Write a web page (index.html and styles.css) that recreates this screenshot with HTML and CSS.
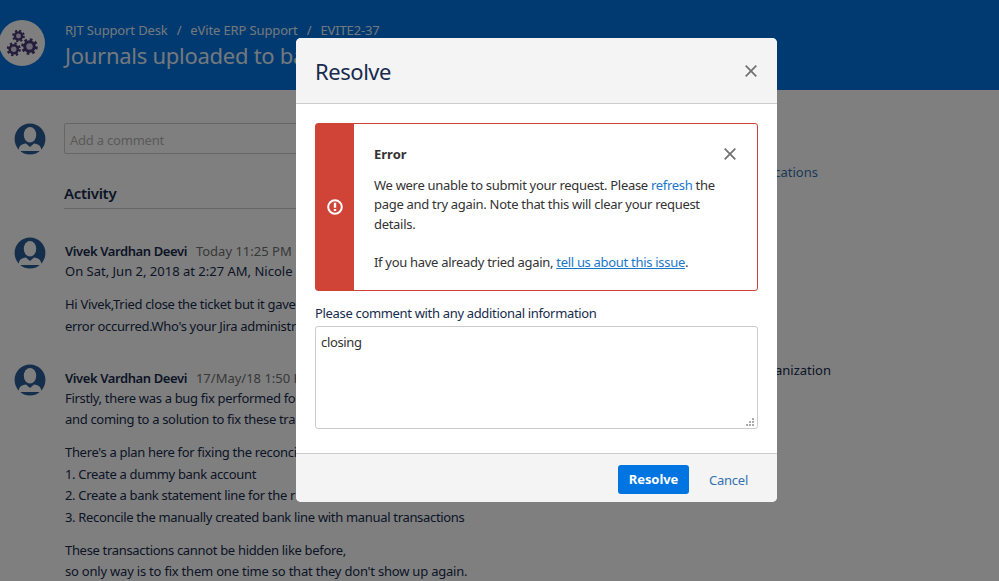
FILE: index.html
```html
<!DOCTYPE html>
<html lang="en">
<head>
  <meta charset="UTF-8">
  <meta name="viewport" content="width=device-width, initial-scale=1.0">
  <title>RJT Support Desk</title>
  <link rel="stylesheet" href="styles.css">
</head>
<body>
  <!-- shared icons -->
  <svg class="defs" width="0" height="0">
    <symbol id="avatar" viewBox="0 0 32 32">
      <circle cx="16" cy="16" r="15.4" fill="#2a5d96"/>
      <ellipse cx="16" cy="11.8" rx="6.2" ry="7.8" fill="#fff"/>
      <path d="M4.6 28C4.6 23 7.5 21.2 12 20.6L16 24L20 20.6C24.5 21.2 27.4 23 27.4 28Z" fill="#fff"/>
    </symbol>
    <symbol id="gear" viewBox="-10 -10 20 20">
      <circle r="5.6" fill="#d9d2ea" stroke="currentColor" stroke-width="3.6"/>
      <circle r="8.2" fill="none" stroke="currentColor" stroke-width="3.2" stroke-dasharray="3.2 3.24"/>
    </symbol>
    <symbol id="close" viewBox="0 0 12 12">
      <path d="M.7.7L11.3 11.3M11.3.7L.7 11.3" stroke="#707070" stroke-width="1.7"/>
    </symbol>
  </svg>

  <div class="page">
    <header class="header">
      <svg class="project-logo" viewBox="0 0 46 46">
        <circle cx="23" cy="23" r="23" fill="#fff"/>
        <g color="#4a3a78">
          <use href="#gear" x="13" y="9.5" width="13" height="13"/>
          <use href="#gear" x="7.5" y="22" width="14.5" height="14.5"/>
          <use href="#gear" x="22" y="18" width="17" height="17"/>
        </g>
      </svg>
      <div class="header-text">
        <nav class="breadcrumbs">
          <span>RJT Support Desk</span><span class="sep">/</span><span>eVite ERP Support</span><span class="sep">/</span><span>EVITE2-37</span>
        </nav>
        <h1>Journals uploaded to bank</h1>
      </div>
    </header>

    <div class="content">
      <main class="main">
        <div class="row comment-row">
          <svg class="avatar"><use href="#avatar"/></svg>
          <div class="comment-input">Add a comment</div>
        </div>
        <h2 class="activity-title">Activity</h2>

        <div class="row activity">
          <svg class="avatar"><use href="#avatar"/></svg>
          <div class="activity-body">
            <div class="meta"><strong>Vivek Vardhan Deevi</strong><span>Today 11:25 PM</span></div>
            <p class="intro">On Sat, Jun 2, 2018 at 2:27 AM, Nicole</p>
            <p>Hi Vivek,Tried close the ticket but it gave<br>error occurred.Who's your Jira administrator</p>
          </div>
        </div>

        <div class="row activity">
          <svg class="avatar"><use href="#avatar"/></svg>
          <div class="activity-body">
            <div class="meta"><strong>Vivek Vardhan Deevi</strong><span>17/May/18 1:50 PM</span></div>
            <p>Firstly, there was a bug fix performed for<br>and coming to a solution to fix these trans</p>
            <p>There's a plan here for fixing the reconciliation<br>1. Create a dummy bank account<br>2. Create a bank statement line for the r<br>3. Reconcile the manually created bank line with manual transactions</p>
            <p>These transactions cannot be hidden like before,<br><span class="wide">so only way is to fix them one time so that they don't show up again.</span></p>
          </div>
        </div>
      </main>

      <aside class="sidebar">
        <a class="side-link">notifications</a>
        <div class="side-text">organization</div>
      </aside>
    </div>
  </div>

  <div class="overlay">
    <div class="dialog">
      <div class="dialog-header">
        <h2>Resolve</h2>
        <svg class="close"><use href="#close"/></svg>
      </div>
      <div class="dialog-body">
        <div class="error">
          <div class="error-stripe">
            <svg class="error-icon" viewBox="0 0 16 16">
              <circle cx="8" cy="8" r="6.8" fill="none" stroke="#fff" stroke-width="2"/>
              <path d="M6.8 3.8H9.2V8.8H6.8ZM6.8 10H9.2V12H6.8Z" fill="#fff"/>
            </svg>
          </div>
          <div class="error-content">
            <div class="error-title">
              <strong>Error</strong>
              <svg class="close"><use href="#close"/></svg>
            </div>
            <p>We were unable to submit your request. Please <a>refresh</a> the<br>page and try again. Note that this will clear your request<br>details.</p>
            <p>If you have already tried again, <a class="underlined">tell us about this issue</a>.</p>
          </div>
        </div>
        <label class="field-label" for="comment">Please comment with any additional information</label>
        <div class="field">
          <textarea id="comment">closing</textarea>
          <svg class="grip" viewBox="0 0 8 8"><path d="M6 0h2v2H6zM3 3h2v2H3zM6 3h2v2H6zM0 6h2v2H0zM3 6h2v2H3zM6 6h2v2H6z" fill="#aaa"/></svg>
        </div>
      </div>
      <div class="dialog-footer">
        <button class="btn-primary">Resolve</button>
        <a class="cancel">Cancel</a>
      </div>
    </div>
  </div>
</body>
</html>
```
FILE: styles.css
```css
* {
  box-sizing: border-box;
}

body {
  margin: 0;
  height: 581px;
  overflow: hidden;
  background: #fff;
  color: #172b4d;
  font-family: "Noto Sans", "Open Sans", sans-serif;
  font-size: 13px;
  line-height: 21.5px;
}

h1, h2, p {
  margin: 0;
  font-weight: normal;
}

.defs {
  display: block;
}

.page {
  height: 581px;
  overflow: hidden;
  white-space: nowrap;
}

/* header */
.header {
  display: flex;
  height: 90px;
  padding-top: 20px;
  background: #0074e0;
  color: #fff;
}

.project-logo {
  width: 46px;
  height: 46px;
  margin-left: -1px;
  flex: none;
}

.header-text {
  margin-left: 20px;
  opacity: 0.9;
}

.breadcrumbs {
  line-height: 20px;
  letter-spacing: -0.13px;
}

.sep {
  margin: 0 9px;
}

.header h1 {
  font-size: 22px;
  line-height: 30px;
  letter-spacing: -0.27px;
}

/* page content */
.content {
  display: flex;
}

.main {
  width: 700px;
  padding: 33px 0 0 14px;
}

.row {
  display: flex;
}

.avatar {
  width: 32px;
  height: 32px;
  margin-right: 18px;
  flex: none;
}

.comment-input {
  flex: 1;
  height: 31px;
  padding: 0 5px;
  border: 1px solid #ccc;
  border-radius: 2px;
  line-height: 32px;
  letter-spacing: -0.22px;
  color: #b4b4b4;
}

.activity-title {
  height: 30px;
  margin: 24px 0 0 50px;
  padding-top: 4px;
  border-bottom: 1px solid #ccc;
  font-size: 15px;
  font-weight: 600;
  line-height: 20px;
  letter-spacing: -0.3px;
}

.activity {
  margin-top: 28px;
}

.activity + .activity {
  margin-top: 26.5px;
}

.activity-body {
  padding: 4px 0 0 1px;
}

.meta {
  line-height: 20px;
}

.meta strong {
  margin-right: 9px;
  font-weight: 600;
  letter-spacing: -0.4px;
}

.meta span {
  color: #707070;
}

.activity p {
  letter-spacing: -0.32px;
}

.activity .intro {
  letter-spacing: 0;
}

.activity .wide {
  letter-spacing: -0.21px;
}

.activity p + p {
  margin-top: 11.5px;
}

.sidebar {
  display: flex;
  flex-direction: column;
  align-items: flex-end;
  width: 131px;
}

.side-link {
  margin: 72px 13px 0 0;
  color: #3572b0;
}

.side-text {
  margin-top: 176px;
}

/* dialog */
.overlay {
  position: absolute;
  inset: 0;
  padding: 38px 0 0 296px;
  background: rgba(0, 0, 0, 0.5);
}

.dialog {
  width: 481px;
  height: 464px;
  overflow: hidden;
  border-radius: 5px;
  background: #fff;
}

.dialog-header {
  display: flex;
  align-items: center;
  justify-content: space-between;
  height: 66px;
  padding: 0 20px 0 19px;
  border-bottom: 1px solid #ccc;
  background: #f4f4f4;
}

.dialog-header h2 {
  font-size: 22px;
  line-height: 30px;
  letter-spacing: -0.45px;
}

.close {
  width: 12px;
  height: 12px;
}

.dialog-body {
  height: 349px;
  padding: 19px;
}

.error {
  display: flex;
  height: 168px;
  border: 1px solid #d04437;
  border-radius: 3px;
  color: #333;
}

.error-stripe {
  display: flex;
  align-items: center;
  justify-content: center;
  width: 38px;
  background: #d04437;
}

.error-icon {
  width: 16px;
  height: 16px;
}

.error-content {
  flex: 1;
  padding: 20px 21px 0 20px;
  line-height: 19.3px;
  letter-spacing: -0.3px;
}

.error-title {
  display: flex;
  align-items: center;
  justify-content: space-between;
  height: 20px;
  margin-bottom: 12px;
}

.error-title strong {
  padding-top: 1px;
  letter-spacing: 0;
}

.error-content p + p {
  margin-top: 19px;
}

.error a {
  color: #1a78c9;
}

.error .underlined {
  text-decoration: underline;
}

.field-label {
  display: block;
  margin-top: 12px;
  letter-spacing: -0.33px;
}

.field {
  position: relative;
  height: 103px;
  margin-top: 1.5px;
}

.field textarea {
  display: block;
  width: 443px;
  height: 103px;
  padding: 5px;
  border: 1px solid #ccc;
  border-radius: 3px;
  color: #333;
  font: inherit;
  line-height: 20px;
  letter-spacing: -0.35px;
  outline: none;
  resize: none;
}

.grip {
  position: absolute;
  right: 4px;
  bottom: 3px;
  width: 8px;
  height: 8px;
}

.dialog-footer {
  display: flex;
  align-items: center;
  justify-content: flex-end;
  height: 49px;
  padding: 2px 29px 0 0;
  border-top: 1px solid #ccc;
  background: #f4f4f4;
}

.btn-primary {
  width: 71px;
  height: 29px;
  margin-right: 20px;
  padding: 2px 0 0;
  border: none;
  border-radius: 3px;
  background: #0074e0;
  color: #fff;
  font: inherit;
  font-weight: bold;
  letter-spacing: -0.1px;
}

.cancel {
  padding-top: 3px;
  color: #3572b0;
  letter-spacing: -0.25px;
}
```
